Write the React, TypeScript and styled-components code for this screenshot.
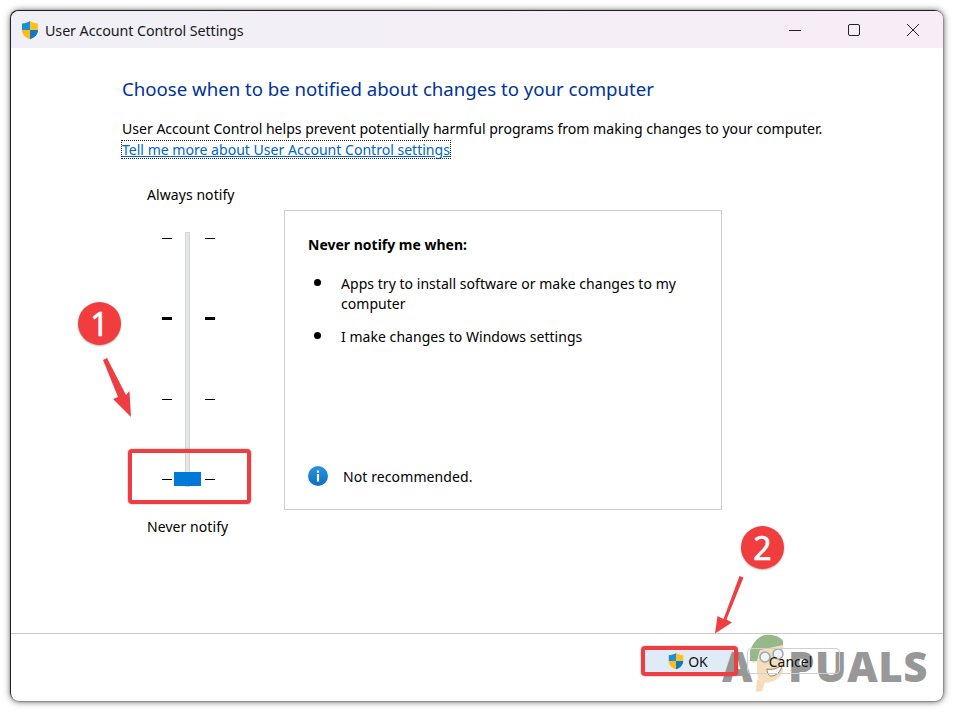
import React from "react";
import styled, { createGlobalStyle } from "styled-components";

const Global = createGlobalStyle`
  html, body { margin: 0; padding: 0; background: #fff; }
  body { width: 954px; height: 712px; overflow: hidden; font-family: "Noto Sans", "Open Sans", sans-serif; }
`;

const Page = styled.div`
  position: relative;
  width: 954px;
  height: 712px;
  padding: 11px;
  box-sizing: border-box;
  overflow: hidden;
`;
const Win = styled.div`
  width: 932px;
  height: 690px;
  background: #fff;
  border-radius: 8px;
  box-shadow: 0 0 7px rgba(0, 0, 0, 0.75), 0 0 2px rgba(0, 0, 0, 0.6), -1px -1px 0 #3c3c3c;
  display: flex;
  flex-direction: column;
  overflow: hidden;
  color: #000;
`;
const TitleBar = styled.div`
  height: 37px;
  flex: none;
  background: linear-gradient(90deg, #f1f0f7, #f7edf7);
  display: flex;
  align-items: center;
  padding: 0 1px 0 9px;
`;
const TitleText = styled.div`
  font-size: 14.3px;
  letter-spacing: -0.08px;
  color: #1a1a1a;
  flex: 1;
  margin-left: 5px;
  padding-top: 1px;
`;
const WinBtn = styled.div`
  width: 59px;
  height: 37px;
  display: flex;
  align-items: center;
  justify-content: center;
`;
const Main = styled.div`
  flex: 1;
  padding: 27px 0 0 111px;
`;
const Heading = styled.h1`
  margin: 0;
  font-size: 18.65px;
  line-height: 28px;
  font-weight: 400;
  color: #003399;
  letter-spacing: -0.02px;
`;
const Intro = styled.p`
  margin: 15px 0 0;
  font-size: 14.1px;
  line-height: 21px;
  letter-spacing: -0.02px;
`;
const HelpLink = styled.a`
  color: #0066cc;
  text-decoration: underline;
  outline: 1px dotted #222;
  display: inline-block;
  line-height: 17px;
  margin-top: 1px;
`;
const Row = styled.div`
  display: flex;
  margin-top: 25px;
`;
const SliderCol = styled.div`
  width: 162px;
  display: flex;
  flex-direction: column;
`;
const SliderLabel = styled.div<{ $top?: number }>`
  font-size: 14px;
  line-height: 20px;
  padding-left: 25px;
  margin-top: ${(p) => p.$top ?? 0}px;
  letter-spacing: 0.07px;
`;
const Slider = styled.div`
  position: relative;
  margin: 27px 0 0 40px;
  width: 53px;
  height: 255px;
  padding-top: 6px;
  box-sizing: border-box;
`;
const Track = styled.div`
  position: absolute;
  left: 23px;
  top: 0;
  bottom: 0;
  width: 5px;
  box-sizing: border-box;
  background: #e4e7e5;
  border: 1px solid #d4d6d5;
`;
const Thumb = styled.div`
  position: absolute;
  left: 12px;
  bottom: 1px;
  width: 27px;
  height: 14px;
  background: #0078d7;
`;
const TickRow = styled.div<{ $gap: number; $bold?: boolean }>`
  display: flex;
  justify-content: space-between;
  height: ${(p) => (p.$bold ? 3 : 1)}px;
  margin-bottom: ${(p) => p.$gap}px;
`;
const Tick = styled.div`
  width: 10px;
  height: 100%;
  background: #000;
`;
const Panel = styled.div`
  width: 438px;
  height: 300px;
  box-sizing: border-box;
  margin-top: 25px;
  border: 1.5px solid #cfcfcf;
  padding: 24px 23px 0;
  display: flex;
  flex-direction: column;
  position: relative;
`;
const PanelTitle = styled.div`
  font-size: 14px;
  line-height: 20px;
  font-weight: 700;
  letter-spacing: 0;
`;
const List = styled.ul`
  list-style: none;
  margin: 19px 0 0;
  padding: 0;
`;
const Item = styled.li`
  position: relative;
  padding-left: 33px;
  width: 360px;
  font-size: 14px;
  line-height: 20px;
  letter-spacing: 0.04px;
  margin-bottom: 13px;
  &::before {
    content: "";
    position: absolute;
    left: 6px;
    top: 5px;
    width: 7px;
    height: 7px;
    border-radius: 50%;
    background: #000;
  }
`;
const Notice = styled.div`
  position: absolute;
  left: 23px;
  bottom: 23px;
  display: flex;
  align-items: center;
  gap: 15px;
  font-size: 14px;
  letter-spacing: 0.1px;
`;
const Footer = styled.div`
  height: 68px;
  flex: none;
  border-top: 1px solid #c9c9c9;
  display: flex;
  align-items: flex-start;
  padding: 14px 0 0 634px;
  gap: 9px;
  box-sizing: border-box;
`;
const OkBtn = styled.div`
  width: 93px;
  height: 24px;
  margin-top: 1px;
  box-sizing: border-box;
  border-radius: 3px;
  border: 1px solid #cfe2f3;
  background: #dfebf7;
  display: flex;
  align-items: center;
  justify-content: center;
  gap: 3px;
  padding-right: 8px;
  font-size: 14px;
  color: #111;
`;
const CancelBtn = styled.div`
  width: 93px;
  height: 26px;
  box-sizing: border-box;
  border-radius: 4px;
  border: 1px solid #d0d0d0;
  background: transparent;
  display: flex;
  align-items: center;
  justify-content: center;
  padding-right: 6px;
  font-size: 14px;
  color: #111;
  position: relative;
  z-index: 4;
`;
const Annot = styled.div<{ $x: number; $y: number; $w: number; $h: number }>`
  position: absolute;
  left: ${(p) => p.$x}px;
  top: ${(p) => p.$y}px;
  width: ${(p) => p.$w}px;
  height: ${(p) => p.$h}px;
  box-sizing: border-box;
  border: 4px solid #ef3e42;
  border-radius: 4px;
  box-shadow: 0 0 2px rgba(0, 0, 0, 0.4);
  z-index: 5;
`;
const Badge = styled.div<{ $x: number; $y: number }>`
  position: absolute;
  left: ${(p) => p.$x}px;
  top: ${(p) => p.$y}px;
  width: 43px;
  height: 43px;
  border-radius: 50%;
  background: #f23d3f;
  color: #fff;
  font: 400 32px/43px "Noto Sans", sans-serif;
  -webkit-text-stroke: 0.6px #fff;
  text-align: center;
  box-shadow: 0 1px 2px rgba(0, 0, 0, 0.3);
  z-index: 5;
`;
const Overlay = styled.svg`
  position: absolute;
  left: 0;
  top: 0;
  z-index: 5;
  pointer-events: none;
`;
const Watermark = styled.div`
  position: absolute;
  left: 722px;
  top: 633px;
  width: 210px;
  height: 60px;
  z-index: 3;
  opacity: 0.8;
  pointer-events: none;
`;
const MarkText = styled.span<{ $x: number }>`
  position: absolute;
  left: ${(p) => p.$x}px;
  top: 8px;
  font: 800 42px/50px "Open Sans", sans-serif;
  color: #7f7f7f;
  letter-spacing: 0.5px;
`;
const Mascot = styled.svg`
  position: absolute;
  left: 25px;
  top: 0;
`;

const Shield = ({ size }: { size: number }) => (
  <svg width={size} height={size} viewBox="0 0 20 20">
    <path d="M10 1C7.500 2.600 5 3.300 2 3.400V10h8z" fill="#1c8fdc" />
    <path d="M10 1c2.500 1.600 5 2.300 8 2.400V10h-8z" fill="#fcc21b" />
    <path d="M2 10c0 4.500 3.200 7.700 8 9.200V10z" fill="#f9bd14" />
    <path d="M18 10c0 4.500-3.200 7.700-8 9.200V10z" fill="#1277c6" />
  </svg>
);

const Ticks = () => (
  <>
    <TickRow $gap={78}><Tick /><Tick /></TickRow>
    <TickRow $gap={79} $bold><Tick /><Tick /></TickRow>
    <TickRow $gap={79}><Tick /><Tick /></TickRow>
    <TickRow $gap={0}><Tick /><Tick /></TickRow>
  </>
);

export default function App() {
  return (
    <Page>
      <Global />
      <Win>
        <TitleBar>
          <Shield size={20} />
          <TitleText>User Account Control Settings</TitleText>
          <WinBtn>
            <svg width="14" height="14" viewBox="0 0 14 14"><path d="M1 7.500h12" stroke="#222" strokeWidth="1" /></svg>
          </WinBtn>
          <WinBtn>
            <svg width="14" height="14" viewBox="0 0 14 14"><rect x="1.500" y="1.500" width="11" height="11" rx="1.500" fill="none" stroke="#222" strokeWidth="1" /></svg>
          </WinBtn>
          <WinBtn>
            <svg width="14" height="14" viewBox="0 0 14 14"><path d="M1 1l12 12M13 1L1 13" stroke="#222" strokeWidth="1" /></svg>
          </WinBtn>
        </TitleBar>
        <Main>
          <Heading>Choose when to be notified about changes to your computer</Heading>
          <Intro>
            User Account Control helps prevent potentially harmful programs from making changes to your computer.
            <br />
            <HelpLink>Tell me more about User Account Control settings</HelpLink>
          </Intro>
          <Row>
            <SliderCol>
              <SliderLabel>Always notify</SliderLabel>
              <Slider>
                <Track />
                <Ticks />
                <Thumb />
              </Slider>
              <SliderLabel $top={30}>Never notify</SliderLabel>
            </SliderCol>
            <Panel>
              <PanelTitle>Never notify me when:</PanelTitle>
              <List>
                <Item>Apps try to install software or make changes to my computer</Item>
                <Item>I make changes to Windows settings</Item>
              </List>
              <Notice>
                <svg width="20" height="20" viewBox="0 0 20 20">
                  <defs>
                    <linearGradient id="infoG" x1="0" y1="0" x2="0" y2="1">
                      <stop offset="0" stopColor="#2a93dd" />
                      <stop offset="1" stopColor="#0f6fc0" />
                    </linearGradient>
                  </defs>
                  <circle cx="10" cy="10" r="10" fill="url(#infoG)" />
                  <rect x="8.900" y="8" width="2.200" height="7.500" fill="#fff" />
                  <rect x="8.900" y="4.500" width="2.200" height="2.200" fill="#fff" />
                </svg>
                Not recommended.
              </Notice>
            </Panel>
          </Row>
        </Main>
        <Footer>
          <OkBtn>
            <Shield size={18} />
            OK
          </OkBtn>
          <CancelBtn>Cancel</CancelBtn>
        </Footer>
      </Win>

      <Annot $x={128} $y={449} $w={123} $h={55} />
      <Annot $x={641} $y={646} $w={97} $h={30} />
      <Badge $x={78} $y={302}>1</Badge>
      <Badge $x={741} $y={526}>2</Badge>
      <Overlay width="954" height="712" viewBox="0 0 954 712">
        <path d="M103 360l4-2 19 37 3.500-4 1.500 26-18-18 5-2z" fill="#ef3e42" />
        <path d="M743.500 577.500l-4-1.500-16 43-6-3-2.500 17.500 17-11-5.500-3z" fill="#ef3e42" />
      </Overlay>
      <Watermark>
        <MarkText $x={0}>A</MarkText>
        <Mascot width="40" height="60" viewBox="0 0 40 60">
          <path d="M10 46c3 2 6 3 8 3l-3 9-6 1z" fill="#f3d3a8" />
          <path d="M3 22c-1 4 1 7 4 8l3-2V16z" fill="#f3d3a8" />
          <path d="M10 28c0 7 0 13 1 17 1 3 3 5 6 5 9 0 17-5 19-12V10L14 15z" fill="#f5d6ac" />
          <path d="M3 28V18C6 9 12 3 18 2c7-1 15 1 18 6v4L13 17l-3 11z" fill="#7ea86c" />
          <circle cx="18" cy="24" r="5" fill="#e9f1f5" stroke="#7f949f" strokeWidth="1.500" />
          <circle cx="31" cy="21" r="5" fill="#e9f1f5" stroke="#7f949f" strokeWidth="1.500" />
          <path d="M20 36c5 1 10 0 15-4-1 7-6 11-11 11-2 0-4-3-4-7z" fill="#fff" stroke="#7c5442" strokeWidth="1" />
        </Mascot>
        <MarkText $x={66}>PUALS</MarkText>
      </Watermark>
    </Page>
  );
}
